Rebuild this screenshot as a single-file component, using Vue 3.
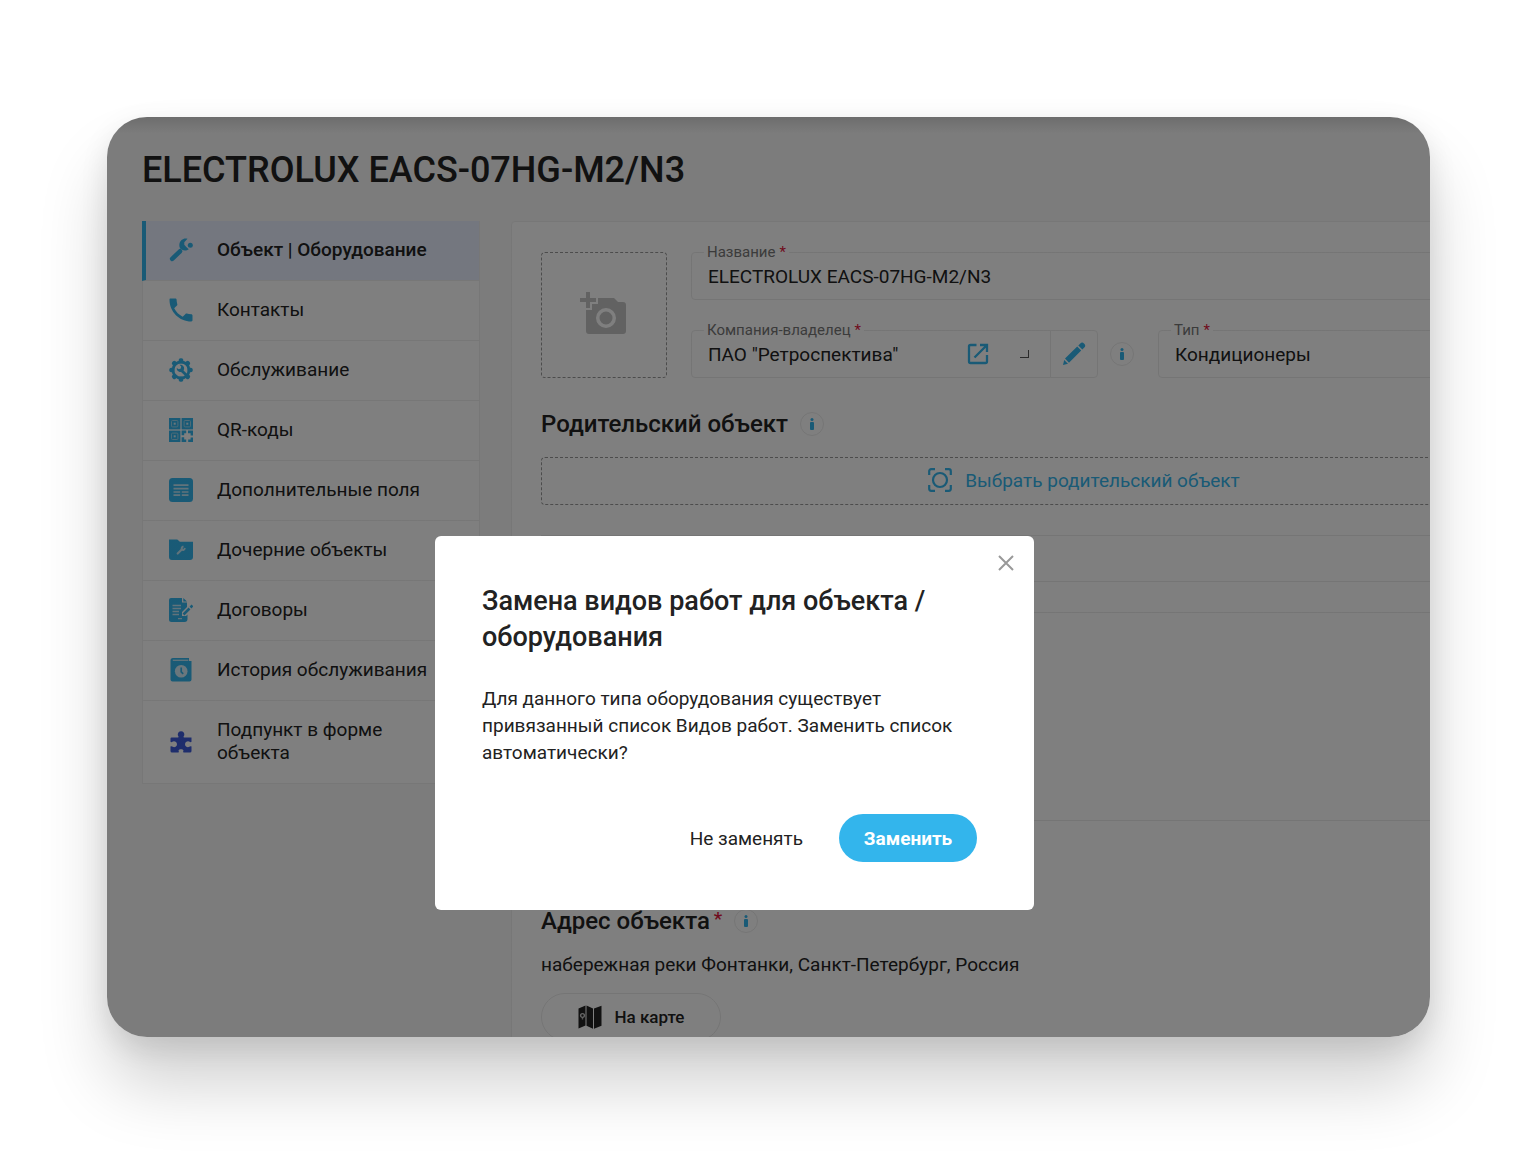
<script setup>
import { ref } from 'vue'

const menu = [
  { id: 'object', label: 'Объект | Оборудование', active: true },
  { id: 'contacts', label: 'Контакты' },
  { id: 'service', label: 'Обслуживание' },
  { id: 'qr', label: 'QR-коды' },
  { id: 'fields', label: 'Дополнительные поля' },
  { id: 'children', label: 'Дочерние объекты' },
  { id: 'contracts', label: 'Договоры' },
  { id: 'history', label: 'История обслуживания' },
  { id: 'custom', label: 'Подпункт в форме объекта' },
]

const name = ref('ELECTROLUX EACS-07HG-M2/N3')
const owner = ref('ПАО "Ретроспектива"')
const type = ref('Кондиционеры')
</script>

<template>
  <div class="stage">
    <div class="frame">
      <h1>ELECTROLUX EACS-07HG-M2/N3</h1>
      <div class="columns">
        <nav class="menu">
          <a v-for="item in menu" :key="item.id" href="#" :class="{ active: item.active }">
            <svg v-if="item.id === 'object'" viewBox="0 0 24 24">
              <path d="M3.200 20.800 11 13.300" stroke="currentColor" stroke-width="4.600" stroke-linecap="round" />
              <path fill="currentColor" d="M18.500.8 15.300 4.200 15.300 6.800 17.300 9 19.800 11.300C17.500 13 14.800 12.800 13 11.800 10.800 10.600 10 8.300 10.400 6 11 2 15-.6 18.500.8Z" />
              <circle cx="21.300" cy="7.300" r="2.500" fill="currentColor" />
            </svg>
            <svg v-else-if="item.id === 'contacts'" viewBox="0 0 24 24">
              <path fill="currentColor" d="M1.300.5H6.400C7 .5 7.600 1 7.600 1.700 7.600 3.300 7.900 4.800 8.300 6.200 8.500 6.700 8.400 7.200 8 7.500L5.200 10.300C7 13.900 10 16.900 13.700 18.700L16.500 15.900C16.900 15.500 17.400 15.500 17.800 15.600 19.200 16.100 20.700 16.300 22.300 16.300 23 16.300 23.500 16.900 23.500 17.500V22.300C23.500 23 23 23.500 22.300 23.500 10.300 23.500.5 13.700.5 1.700.5 1 .8.500 1.300.500Z" />
            </svg>
            <svg v-else-if="item.id === 'service'" viewBox="0 0 24 24">
              <circle cx="12" cy="12" r="8" fill="none" stroke="currentColor" stroke-width="2.800" />
              <g fill="currentColor">
                <rect v-for="n in 8" :key="n" x="9.700" y=".3" width="4.600" height="5" rx="1.800" :transform="`rotate(${n * 45} 12 12)`" />
              </g>
              <path d="m12 12 5 4.800" stroke="currentColor" stroke-width="2.800" />
              <path fill="currentColor" d="M10.500 6.800c3-.3 5 1.800 4.600 4.200-.4 2.200-2.800 3.600-5 2.700-1.700-.6-2.600-2.100-2.300-3.700l2 1.300 2-.8.4-2Z" />
            </svg>
            <svg v-else-if="item.id === 'qr'" viewBox="0 0 24 24">
              <g v-for="p in [[0, 0], [12.600, 0], [0, 12.600]]" :key="p.join()" :transform="`translate(${p[0]} ${p[1]})`">
                <rect width="11.400" height="11.400" fill="currentColor" />
                <rect x="2.500" y="2.500" width="6.400" height="6.400" rx="1" fill="none" stroke="#9bd6ee" />
                <rect x="4.700" y="4.700" width="2" height="2" fill="#d5effa" />
              </g>
              <path fill="currentColor" d="M12.600 12.600h4.600v2.600h-2v2h-2.600ZM19 12.600h5v5h-2.400v-2.400H19ZM12.600 19.200h2.600v2.200h2V24h-4.600ZM24 19.600V24h-4.800v-2.400h2.400v-2Z" />
            </svg>
            <svg v-else-if="item.id === 'fields'" viewBox="0 0 24 24">
              <rect width="24" height="24" rx="3.500" fill="currentColor" />
              <path d="M4.500 7.200h15M4.500 10.700h15M4.500 14h6.700M12.800 14h6.700M4.500 17.200h6.700M12.800 17.200h6.700" stroke="#c3e7f6" stroke-width="1.700" />
            </svg>
            <svg v-else-if="item.id === 'children'" viewBox="0 0 24 24">
              <path fill="currentColor" d="M0 1.500h8.300l2.600 2.300H24V19a3 3 0 0 1-3 3H3a3 3 0 0 1-3-3Z" />
              <path d="m8.700 15.500 4.300-4.200" stroke="#c3e7f6" stroke-width="2.200" stroke-linecap="round" />
              <path d="M14.500 8.300c-2 .7-2.300 2.200-1.500 3.300 1 .8 2.500.3 3-1.600" fill="none" stroke="#c3e7f6" stroke-width="1.800" />
            </svg>
            <svg v-else-if="item.id === 'contracts'" viewBox="0 0 24 24">
              <path fill="currentColor" d="M2 0h11v4.500h5V9l-5 5v4h4l1.500-1.500V21a3 3 0 0 1-3 3H2.500A2.500 2.500 0 0 1 0 21.500V2a2 2 0 0 1 2-2ZM14.300 0 18 3.500h-3.700Z" />
              <path d="M3.500 7.500H12M3.500 10.500h8.500M3.500 13.500h6.500M3.500 16.500h6.500M9 20.700h4" stroke="#c3e7f6" stroke-width="1.300" />
              <path d="m14.500 16.500 6-6M21.500 9.500l2-2" stroke="currentColor" stroke-width="2.600" />
            </svg>
            <svg v-else-if="item.id === 'history'" viewBox="0 0 24 24">
              <path fill="currentColor" d="M4 0h16v3h2.500v18.500a2 2 0 0 1-2 2h-17a2 2 0 0 1-2-2v-19A2.500 2.500 0 0 1 4 0Z" />
              <path d="M3.800 2.300h15.500" stroke="#c3e7f6" stroke-width="1.300" />
              <circle cx="12.200" cy="13.300" r="6.300" fill="#d5effa" />
              <path d="M12.200 9.500v4.300l2 2" fill="none" stroke="currentColor" stroke-width="1.700" />
            </svg>
            <svg v-else class="puzzle" viewBox="0 0 24 24">
              <path fill="currentColor" d="M2.500 8.500h6.700c.6-.7.300-1.200-.3-2a3.300 3.300 0 1 1 6.300 0c-.6.800-.9 1.300-.3 2h7.600v4.300c-.7.700-1.500.3-2.300-.2a2.900 2.900 0 1 0 0 5.200c.8-.5 1.600-.9 2.300-.2V22a1.500 1.500 0 0 1-1.500 1.500h-6.500c-.6-.6-.3-1.400 0-2-.6-1.600-4.400-1.600-5 0 .3.600.6 1.400 0 2H3A1.500 1.500 0 0 1 1.500 22v-4.400c.7-.7 1.500-.3 2.300.2a2.900 2.900 0 1 0 0-5.200c-.8.500-1.600.9-2.300.2V9.500a1 1 0 0 1 1-1Z" />
            </svg>
            <span>{{ item.label }}</span>
          </a>
        </nav>

        <main class="panel">
          <div class="top">
            <button class="photo" aria-label="Добавить фото">
              <svg viewBox="1 0 48 48">
                <path fill="currentColor" d="M7 1h4v6h6v4h-6v6H7v-6H1V7h6Z" />
                <path fill="currentColor" fill-rule="evenodd" d="M19 7h16l4 4h5a3 3 0 0 1 3 3v26a3 3 0 0 1-3 3H10a3 3 0 0 1-3-3V19h6v-6h6ZM27 17a10 10 0 1 0 0 20 10 10 0 0 0 0-20Zm0 3.500a6.500 6.500 0 1 1 0 13 6.500 6.500 0 0 1 0-13Z" />
              </svg>
            </button>
            <div class="fields">
              <div class="field">
                <label for="name">Название<i>*</i></label>
                <input id="name" v-model="name" type="text">
              </div>
              <div class="row">
                <div class="owner">
                  <div class="field">
                    <label for="owner">Компания-владелец<i>*</i></label>
                    <input id="owner" v-model="owner" type="text">
                    <a class="open" href="#" aria-label="Открыть">
                      <svg viewBox="0 0 22 22" fill="none" stroke="currentColor" stroke-width="2.300">
                        <path d="M9.500 2H3.500A1.500 1.500 0 0 0 2 3.500v15A1.500 1.500 0 0 0 3.500 20h15a1.500 1.500 0 0 0 1.500-1.500V12M13 2h7v7M19.500 2.500 7.500 14.500" />
                      </svg>
                    </a>
                    <span class="corner"></span>
                  </div>
                  <button class="edit" aria-label="Изменить">
                    <svg viewBox="0 0 24 24" fill="currentColor">
                      <path d="m1 23 1.200-5 3.800 3.800ZM3 16.500 15.200 4.600l4 4L7 20.800ZM16.300 3.500l2-2a2.600 2.600 0 0 1 3.700 0l.3.300a2.600 2.600 0 0 1 0 3.700l-2 2Z" />
                    </svg>
                  </button>
                </div>
                <button class="info" aria-label="Подсказка"><svg viewBox="0 0 4 12"><circle cx="2" cy="1.500" r="1.500" /><rect y="4" width="4" height="8" rx="1" /></svg></button>
                <div class="field type">
                  <label for="type">Тип<i>*</i></label>
                  <input id="type" v-model="type" type="text">
                </div>
              </div>
            </div>
          </div>

          <div class="heading">
            <h2>Родительский объект</h2>
            <button class="info" aria-label="Подсказка"><svg viewBox="0 0 4 12"><circle cx="2" cy="1.500" r="1.500" /><rect y="4" width="4" height="8" rx="1" /></svg></button>
          </div>
          <button class="pick">
            <svg viewBox="0 0 24 24" fill="none" stroke="currentColor" stroke-width="2.200">
              <circle cx="12" cy="12" r="7" />
              <path d="M1.200 7V3.200a2 2 0 0 1 2-2H7M17 1.200h3.800a2 2 0 0 1 2 2V7M22.800 17v3.800a2 2 0 0 1-2 2H17M7 22.800H3.200a2 2 0 0 1-2-2V17" />
            </svg>
            <span>Выбрать родительский объект</span>
          </button>
          <div class="slot"></div>
          <section class="works"></section>
          <section class="address">
            <div class="heading">
              <h2>Адрес объекта<i>*</i></h2>
              <button class="info" aria-label="Подсказка"><svg viewBox="0 0 4 12"><circle cx="2" cy="1.500" r="1.500" /><rect y="4" width="4" height="8" rx="1" /></svg></button>
            </div>
            <p>набережная реки Фонтанки, Санкт-Петербург, Россия</p>
            <button class="map">
              <svg viewBox="0 0 24 24">
                <path fill="currentColor" d="M.5 3.500 7.500.5v20l-7 3ZM8.500.5l6.500 3v20.300l-6.500-3ZM16 3.500l7.500-2.800v20L16 23.800Z" />
                <path d="M4.500 14.500V12" stroke="#aaa" stroke-width="1.400" />
                <circle cx="4.500" cy="10.500" r="1.900" fill="none" stroke="#ccc" stroke-width="1.400" />
              </svg>
              <span>На карте</span>
            </button>
          </section>
        </main>
      </div>

      <div class="overlay">
        <div class="dialog" role="dialog" aria-modal="true" aria-labelledby="dialog-title">
          <button class="close" aria-label="Закрыть">
            <svg viewBox="0 0 16 16"><path d="m1 1 14 14M15 1 1 15" stroke="currentColor" stroke-width="2" /></svg>
          </button>
          <h3 id="dialog-title">Замена видов работ для объекта / оборудования</h3>
          <p>Для данного типа оборудования существует привязанный список Видов работ. Заменить список автоматически?</p>
          <div class="actions">
            <button class="ghost">Не заменять</button>
            <button class="primary">Заменить</button>
          </div>
        </div>
      </div>
    </div>
  </div>
</template>

<style>
body {
  margin: 0;
  background: #fff;
}
</style>

<style scoped>
* {
  box-sizing: border-box;
}
.stage {
  min-height: 100vh;
  padding: 117px 108px 117px 107px;
  display: flex;
  overflow: hidden;
  font-family: Roboto, "Liberation Sans", sans-serif;
  font-size: 19px;
  color: #222;
}
.frame {
  position: relative;
  flex: 1;
  min-width: 0;
  height: calc(100vh - 234px);
  padding: 33px 0 0 35px;
  border-radius: 40px;
  overflow: hidden;
  background: #f8f8f8;
  box-shadow: 0 10px 28px rgba(0, 0, 0, 0.1), 0 48px 68px rgba(0, 0, 0, 0.18);
}
h1, h2, h3, p {
  margin: 0;
}
button {
  font: inherit;
  color: inherit;
  padding: 0;
  background: none;
  border: 0;
  flex: none;
}
svg {
  display: block;
  flex: none;
}
i {
  font-style: normal;
  color: #e0163c;
  margin-left: 4px;
}
h1 {
  font-size: 36px;
  line-height: 40px;
  font-weight: 500;
}
.columns {
  display: flex;
  align-items: flex-start;
  gap: 31px;
  margin-top: 31px;
}
.menu {
  width: 338px;
  flex: none;
  background: #fff;
  border: 1px solid #efefef;
  border-top: 0;
}
.menu a {
  display: flex;
  align-items: center;
  gap: 24px;
  min-height: 60px;
  padding: 11px 40px 13px 26px;
  border-bottom: 1px solid #efefef;
  color: inherit;
  text-decoration: none;
  line-height: 23px;
}
.menu a:last-child {
  min-height: 82px;
  border-bottom: 0;
}
.menu a.active {
  margin-left: -1px;
  padding-left: 23px;
  border-left: 4px solid #33b5ec;
  background: #e8effe;
  font-weight: 500;
}
.menu a:nth-child(8) {
  padding-right: 0;
}
.menu svg {
  width: 24px;
  height: 24px;
  color: #33b5ec;
}
.menu svg.puzzle {
  color: #3d5bd9;
}
.panel {
  flex: 1;
  min-width: 0;
  margin-right: -227px;
  padding: 30px 29px;
  background: #fff;
  border: 1px solid #efefef;
  border-radius: 4px;
}
.top {
  display: flex;
  gap: 24px;
}
.photo {
  width: 126px;
  height: 126px;
  border: 1px dashed #999;
  border-radius: 4px;
  display: flex;
  align-items: center;
  justify-content: center;
  color: #c4c4c4;
}
.photo svg {
  width: 48px;
  height: 48px;
}
.fields {
  flex: 1;
  display: flex;
  flex-direction: column;
  gap: 30px;
}
.row, .owner {
  display: flex;
  align-items: center;
}
.field {
  position: relative;
  height: 48px;
  display: flex;
  align-items: center;
  border: 1px solid #ebebeb;
  border-radius: 4px;
}
.field label {
  position: absolute;
  top: -10px;
  left: 12px;
  padding: 0 3px;
  background: #fff;
  font-size: 15px;
  line-height: 18px;
  color: #777;
}
.field input {
  flex: 1;
  min-width: 0;
  height: 46px;
  padding: 0 0 0 16px;
  border: 0;
  background: none;
  font: inherit;
  color: inherit;
}
.owner .field {
  width: 360px;
  border-radius: 4px 0 0 4px;
}
.open {
  color: #33b5ec;
}
.open svg {
  width: 22px;
  height: 22px;
}
.corner {
  width: 9px;
  height: 8px;
  margin: 0 21px 0 31px;
  border: solid #555;
  border-width: 0 1px 1px 0;
}
.edit {
  width: 48px;
  height: 48px;
  margin-left: -1px;
  border: 1px solid #ebebeb;
  border-radius: 0 4px 4px 0;
  display: flex;
  align-items: center;
  justify-content: center;
  color: #33b5ec;
}
.edit svg {
  width: 24px;
  height: 24px;
}
.info {
  width: 24px;
  height: 24px;
  border: 1px solid #ebebeb;
  border-radius: 50%;
  display: flex;
  align-items: center;
  justify-content: center;
}
.info svg {
  width: 4px;
  height: 12px;
  fill: #33b5ec;
}
.row .info {
  margin: 0 24px 0 12px;
}
.type {
  flex: 1;
}
.heading {
  display: flex;
  align-items: center;
  gap: 12px;
  margin-top: 32px;
}
h2 {
  font-size: 24px;
  line-height: 28px;
  font-weight: 500;
}
h2 i {
  font-size: 19px;
  vertical-align: 4px;
  line-height: 1;
}
.pick {
  width: 100%;
  height: 48px;
  margin-top: 19px;
  padding-bottom: 2px;
  border: 1px dashed #999;
  border-radius: 4px;
  display: flex;
  align-items: center;
  justify-content: center;
  gap: 13px;
  color: #33b5ec;
}
.pick svg {
  width: 24px;
  height: 24px;
}
.slot {
  height: 47px;
  margin: 30px 0;
  border: solid #ebebeb;
  border-width: 1px 0;
}
.works {
  height: 208px;
  border-top: 1px solid #ebebeb;
}
.address {
  padding-top: 54px;
  border-top: 1px solid #ebebeb;
}
.address p {
  margin-top: 18px;
  line-height: 24px;
}
.map {
  display: flex;
  align-items: center;
  justify-content: center;
  gap: 13px;
  width: 180px;
  height: 48px;
  margin-top: 16px;
  border: 1px solid #ebebeb;
  border-radius: 24px;
  font-size: 17px;
  font-weight: 500;
}
.map svg {
  width: 24px;
  height: 24px;
}
.overlay {
  position: absolute;
  inset: 0;
  background: linear-gradient(rgba(0, 0, 0, 0.56), rgba(0, 0, 0, 0.5) 16px);
}
.dialog {
  position: relative;
  width: 599px;
  margin: 419px 0 0 328px;
  padding: 47px 57px 48px 47px;
  background: #fff;
  border-radius: 6px;
}
h3 {
  font-size: 27px;
  line-height: 36px;
  font-weight: 500;
}
.dialog p {
  margin-top: 30px;
  line-height: 27px;
}
.actions {
  display: flex;
  justify-content: flex-end;
  gap: 36px;
  margin-top: 48px;
}
.primary {
  width: 138px;
  height: 48px;
  border-radius: 24px;
  background: #33b5ec;
  color: #fff;
  font-weight: 700;
}
.close {
  position: absolute;
  top: 19px;
  right: 20px;
  color: #999;
}
.close svg {
  width: 16px;
  height: 16px;
}
</style>
